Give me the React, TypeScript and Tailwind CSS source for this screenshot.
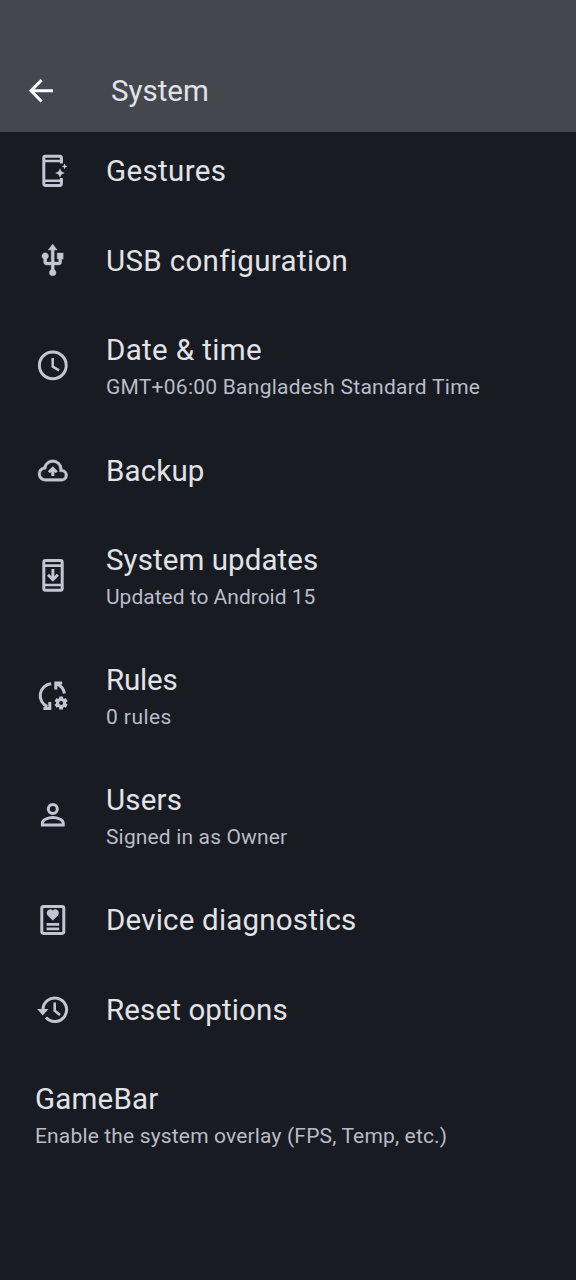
import React from "react";

function Icon({ children }: { children: React.ReactNode }) {
  return (
    <svg
      viewBox="0 0 36 36"
      className="w-9 h-9 shrink-0"
      fill="none"
      stroke="#c2c6d2"
      strokeWidth="3"
    >
      {children}
    </svg>
  );
}

const gesturesIcon = (
  <Icon>
    <path d="M26.4 10.5V4.8a1.6 1.6 0 0 0-1.6-1.6H10.4a1.6 1.6 0 0 0-1.6 1.6v26a1.6 1.6 0 0 0 1.6 1.6h14.4a1.6 1.6 0 0 0 1.6-1.6V25" />
    <path d="M9 8h18.8M9 27.8h18.8" strokeWidth="2.6" />
    <path
      d="M25 15.2l1.5 3.3 3.3 1.5-3.3 1.5-1.5 3.3-1.5-3.3-3.3-1.5 3.3-1.5zM29.6 10.6l.9 1.9 1.9.9-1.9.9-.9 1.9-.9-1.9-1.9-.9 1.9-.9z"
      fill="#c2c6d2"
      stroke="none"
    />
  </Icon>
);

const usbIcon = (
  <Icon>
    <path
      transform="scale(1.5) translate(-.2 -.3)"
      d="M15 7v4h1v2h-3V5h2l-3-4-3 4h2v8H8v-2.07c.7-.37 1.2-1.08 1.2-1.93 0-1.21-.99-2.2-2.2-2.2S4.8 7.79 4.8 9c0 .85.5 1.56 1.2 1.93V13c0 1.11.89 2 2 2h3v3.05c-.71.37-1.2 1.1-1.2 1.95a2.2 2.2 0 0 0 4.4 0c0-.85-.49-1.58-1.2-1.95V15h3c1.11 0 2-.89 2-2v-2h1V7z"
      fill="#c2c6d2"
      strokeWidth=".25"
    />
  </Icon>
);

const clockIcon = (
  <Icon>
    <circle cx="17.8" cy="17.4" r="13.4" />
    <path d="M17.7 10v8.6l6.4 3.8" strokeWidth="2.5" />
  </Icon>
);

const backupIcon = (
  <Icon>
    <path
      transform="translate(1.6 1.3) scale(1.35)"
      d="M6.5 20q-2.28 0-3.89-1.57T1 14.58q0-1.95 1.17-3.48T5.25 9.15q.63-2.3 2.5-3.72T12 4q2.93 0 4.96 2.04T19 11q1.73.2 2.86 1.5T23 15.5q0 1.88-1.31 3.19T18.5 20zm0-2h12q1.05 0 1.78-.72T21 15.5t-.72-1.78T18.5 13H17v-2q0-2.07-1.46-3.54T12 6 8.46 7.46 7 11h-.5q-1.45 0-2.47 1.02T3 14.5t1.02 2.48T6.5 18z"
      fill="#c2c6d2"
      strokeWidth=".25"
    />
    <path d="M17.8 23v-7M13.9 19.2l3.9-3.9 3.9 3.9" strokeWidth="3" />
  </Icon>
);

const updatesIcon = (
  <Icon>
    <rect x="8.8" y="2.4" width="18.4" height="29.8" rx="1.8" />
    <path d="M9 7.6h18M9 27h18" strokeWidth="2.6" />
    <path d="M17.9 11v10.5M13 16.8l4.9 4.9 4.9-4.9" strokeWidth="2.9" />
  </Icon>
);

const rulesIcon = (
  <Icon>
    <path d="M16.2 5.8A11.9 11.9 0 0 0 12.4 28.6" />
    <path d="M8.4 30.6H14.8V24" />
    <path d="M20.8 11.5V5H27.2M21.6 5.8A12.3 12.3 0 0 1 29.4 15.5" />
    <circle cx="26.1" cy="24.9" r="3.6" strokeWidth="3.2" />
    <path
      d="M26.1 18.4v2.6M26.1 28.8v2.6M20.5 21.65l2.2 1.3M29.5 26.85l2.2 1.3M20.5 28.15l2.2-1.3M29.5 22.95l2.2-1.3"
      strokeWidth="3.8"
    />
  </Icon>
);

const usersIcon = (
  <Icon>
    <circle cx="17.8" cy="11" r="4.5" />
    <path d="M7.4 27.1v-2c0-3.6 6-5.5 10.4-5.5s10.4 1.9 10.4 5.5v2z" />
  </Icon>
);

const diagnosticsIcon = (
  <Icon>
    <rect x="6.8" y="3.4" width="22" height="27" rx="1.8" />
    <path
      d="M17.8 17.6l-4.9-4.8c-3.4-3.8 1.8-9.2 4.9-5.2 3.1-4 8.3 1.4 4.9 5.2z"
      fill="#c2c6d2"
      stroke="none"
    />
    <path d="M11.6 21.3h12.6M11.6 25.9h12.6" strokeWidth="2.8" />
  </Icon>
);

const resetIcon = (
  <Icon>
    <path d="M8 17A11.8 11.8 0 1 1 11 24.6" />
    <path d="M2.2 16h11.2l-5.6 6.4z" fill="#c2c6d2" stroke="none" />
    <path d="M19.7 9.5v8.2l5.3 4.4" strokeWidth="2.6" />
  </Icon>
);

type Item = {
  title: string;
  sub?: string;
  icon?: React.ReactNode;
  textClass?: string;
  titleClass?: string;
  subClass?: string;
};

const items: Item[] = [
  {
    title: "Gestures",
    icon: gesturesIcon,
    titleClass: "tracking-[0.37px]",
  },
  {
    title: "USB configuration",
    icon: usbIcon,
    titleClass: "tracking-[0.33px]",
  },
  {
    title: "Date & time",
    sub: "GMT+06:00 Bangladesh Standard Time",
    icon: clockIcon,
    titleClass: "tracking-[0.35px]",
    subClass: "tracking-[0.25px]",
  },
  { title: "Backup", icon: backupIcon, titleClass: "tracking-[0.15px]" },
  {
    title: "System updates",
    sub: "Updated to Android 15",
    icon: updatesIcon,
    titleClass: "tracking-[0.08px]",
  },
  {
    title: "Rules",
    sub: "0 rules",
    icon: rulesIcon,
    titleClass: "tracking-[-0.2px]",
    subClass: "tracking-[0.42px]",
  },
  {
    title: "Users",
    sub: "Signed in as Owner",
    icon: usersIcon,
    titleClass: "tracking-[0.2px]",
    subClass: "tracking-[0.15px]",
  },
  {
    title: "Device diagnostics",
    icon: diagnosticsIcon,
    textClass: "pb-0.5",
    titleClass: "tracking-[0.2px]",
  },
  {
    title: "Reset options",
    icon: resetIcon,
    textClass: "pb-0.5",
    titleClass: "tracking-[0.12px]",
  },
  {
    title: "GameBar",
    sub: "Enable the system overlay (FPS, Temp, etc.)",
    textClass: "pb-0.5",
    titleClass: "tracking-[0.2px]",
    subClass: "tracking-[0.16px]",
  },
];

function Row({ item }: { item: Item }) {
  return (
    <div
      className={`flex items-center gap-[35px] pl-[35px] ${
        item.sub ? "h-[120px]" : "h-[90px]"
      }`}
    >
      {item.icon}
      <div className={`whitespace-nowrap ${item.textClass ?? ""}`}>
        <p
          className={`text-[29.5px] leading-[40px] text-[#e2e2e9] ${
            item.titleClass ?? ""
          }`}
        >
          {item.title}
        </p>
        {item.sub && (
          <p
            className={`mt-px -mb-px text-[21px] leading-[32px] text-[#b9bcc8] ${
              item.subClass ?? ""
            }`}
          >
            {item.sub}
          </p>
        )}
      </div>
    </div>
  );
}

export default function App() {
  return (
    <div className="w-full h-[1280px] overflow-hidden bg-[#181b21] font-['Roboto',sans-serif]">
      <div className="h-[131.5px] bg-[#44474e] pt-[50px]">
        <div className="flex items-center h-[81px] pl-[23px]">
          <svg
            viewBox="0 0 36 36"
            className="w-9 h-9"
            fill="none"
            stroke="#ffffff"
            strokeWidth="3"
          >
            <path d="M30 17.8H8.5M18.6 7.1L8 17.8l10.6 10.7" />
          </svg>
          <h1 className="pl-[52px] text-[29.5px] leading-[40px] text-[#e2e2e9]">
            System
          </h1>
        </div>
      </div>
      <div className="-mt-[5.5px]">
        {items.map((item) => (
          <Row key={item.title} item={item} />
        ))}
      </div>
    </div>
  );
}
